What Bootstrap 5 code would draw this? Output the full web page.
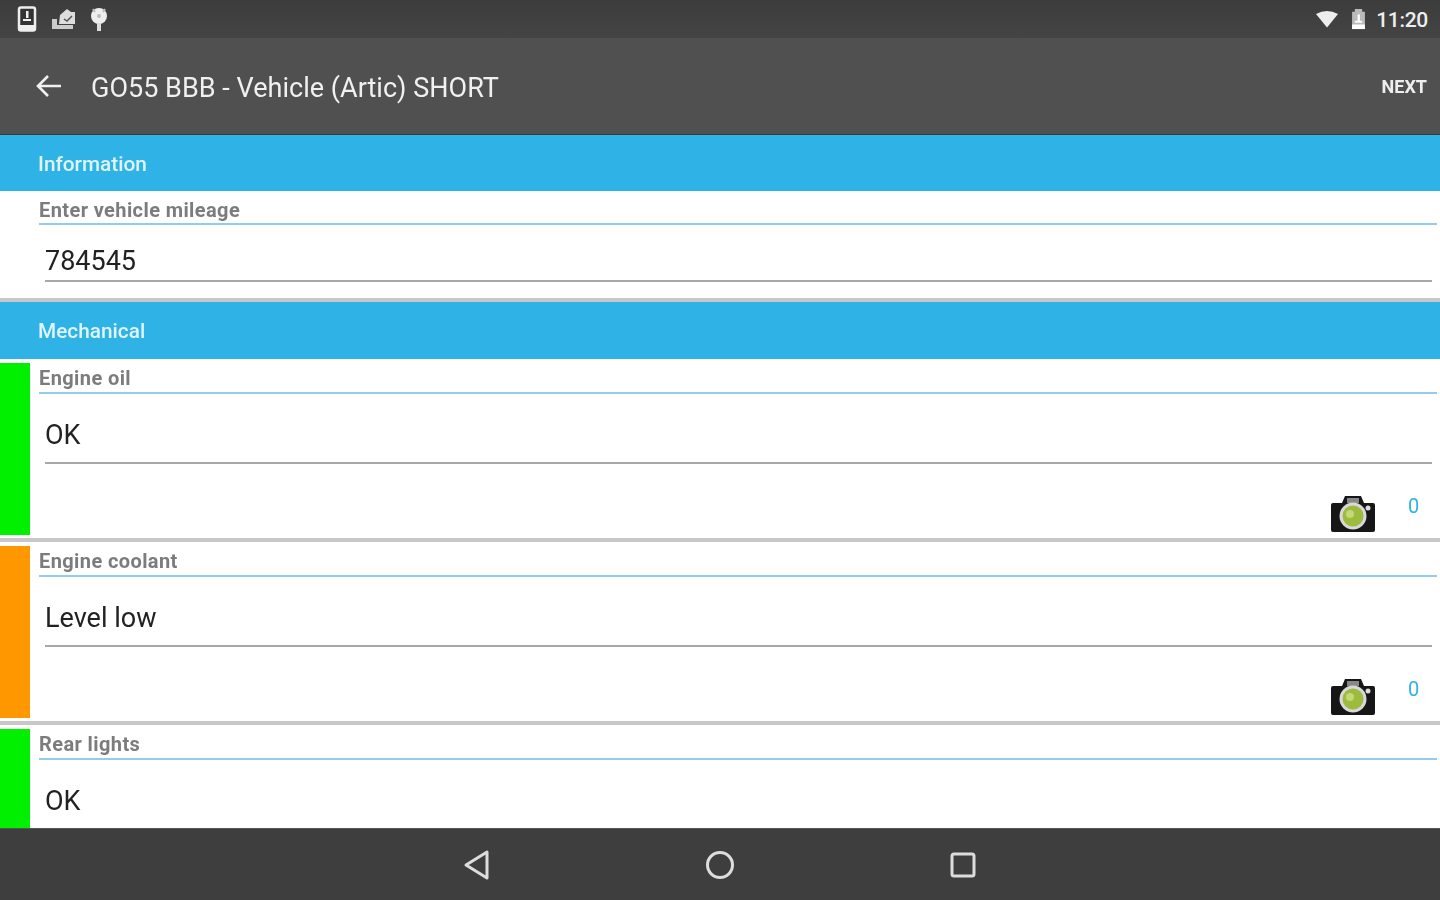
<!doctype html>
<html lang="en"><head><meta charset="utf-8"><title>Vehicle check</title>
<link href="https://cdn.jsdelivr.net/npm/bootstrap@5.3.0/dist/css/bootstrap.min.css" rel="stylesheet">
<style>
html,body{height:100%;margin:0;overflow:hidden}
body{font-family:Roboto,"Liberation Sans",sans-serif;background:#fff}
.app-shell{height:900px;filter:blur(.6px)}
.status-strip{height:38px;background:linear-gradient(#3c3c3c,#444);color:#eee;padding:0 12px 0 17px}
.status-time{font-size:21px;font-weight:500;letter-spacing:-.3px;margin-top:3px;margin-left:10px}
.app-toolbar{height:97px;background:#505050;color:#f0f0f0;border-bottom:1px solid #3a3a3a;padding:0 13px 0 35px}
.toolbar-title{font-size:27px;margin-left:29px;margin-top:5px;letter-spacing:.02px;line-height:1}
.toolbar-next{font-size:18px;font-weight:700;color:#eee}
.content-clip{min-height:0;overflow:hidden}
.section-head{background:#2fb2e6;color:#dff4fd;font-size:20.800px;font-weight:500;padding-left:38px}
.head-info{height:56px;padding-top:4px}
.head-mech{height:57px;padding-top:3px}
.info-body{height:107px;padding-left:39px}
.thick-rule{height:4px;background:#c8c8c8}
.check-row{height:179px;padding-top:4px}
.check-row.row-end{height:auto}
.status-bar{width:30px;flex:0 0 30px;height:172px}
.bar-ok{background:#00f000}
.bar-warn{background:#ff9800}
.row-main{min-width:0;padding-left:9px}
.field-label{font-size:20px;font-weight:700;letter-spacing:.4px;color:#7c7c7c;line-height:24px;height:31px;border-bottom:2px solid #94cdec;margin-right:3px;padding-top:3px}
.field-value{font-size:27px;color:#222;margin:0 8px 0 6px;line-height:1;border-bottom:2px solid #a8a8a8}
.info-body .field-label{height:34px;padding-top:7px}
.info-body .field-value{padding:23px 0 5px}
.check-row .field-value{padding:28px 0 0;height:70px}
.attach-line{height:70px;padding-right:21px;padding-top:30px}
.attach-count{font-size:20px;color:#2fb2e6;margin-left:32px;line-height:1;margin-top:2px;width:11px}
.row-sep{height:4px;background:#c8c8c8}
.nav-strip{height:72px;background:#3e3e3e;border-top:1px solid #555;flex:0 0 72px;padding-top:1px}
.nav-slot{width:243px}
.wifi-gap{margin-left:13px}
.tray-icon{margin-left:6px}
</style></head><body>
<div class="app-shell d-flex flex-column">
<div class="status-strip d-flex align-items-center flex-shrink-0">
<div class="d-flex align-items-center gap-2">
<svg width="20" height="26" viewBox="0 0 20 26"><rect x="2" y="1.500" width="16" height="23" rx="2" fill="#333" stroke="#eee" stroke-width="2.500"/><rect x="2" y="19" width="16" height="5" fill="#eee"/><rect x="9" y="5" width="2.500" height="7" fill="#eee"/><rect x="6" y="13" width="8" height="2" fill="#eee"/></svg>
<svg width="26" height="24" viewBox="0 0 26 24" class="tray-icon"><path d="M9 8 L16 2 L20 5 L24 5 V17 H8Z" fill="#ddd"/><path d="M1 12 H6 V18 H22 V22 H1Z" fill="#ccc"/><path d="M13 12 L16 14 L21 9" fill="none" stroke="#555" stroke-width="1.500"/></svg>
<svg width="20" height="26" viewBox="0 0 20 26" class="ms-1"><circle cx="10" cy="10" r="8" fill="#eee"/><rect x="8" y="17" width="4" height="8" fill="#ddd"/><path d="M4 3 L6 6 M16 3 L14 6" stroke="#bbb" stroke-width="2"/><circle cx="10" cy="10" r="2" fill="#bbb"/></svg>
</div>
<div class="ms-auto d-flex align-items-center">
<svg width="22" height="18" viewBox="0 0 26 20"><path d="M0 4 Q13 -3 26 4 L13 20Z" fill="#eee"/></svg>
<svg width="15" height="22" viewBox="0 0 16 24" class="wifi-gap"><path d="M4 4 V1 H12 V4 H15 V23 H1 V4Z" fill="#bbb"/><rect x="1" y="18" width="14" height="5" fill="#fff"/><rect x="7" y="7" width="2.500" height="8" fill="#fff"/><rect x="4" y="14" width="8" height="2" fill="#fff"/></svg>
<span class="status-time">11:20</span>
</div>
</div>
<div class="app-toolbar d-flex align-items-center flex-shrink-0">
<svg width="27" height="26" viewBox="0 0 27 26"><path d="M26 13 H3 M13 3 L3 13 L13 23" fill="none" stroke="#f0f0f0" stroke-width="2.600"/></svg>
<span class="toolbar-title">GO55 BBB - Vehicle (Artic) SHORT</span>
<span class="toolbar-next ms-auto">NEXT</span>
</div>
<div class="content-clip flex-grow-1">
<div class="section-head head-info d-flex align-items-center">Information</div>
<div class="info-body">
<div class="field-label">Enter vehicle mileage</div>
<div class="field-value">784545</div>
</div>
<div class="thick-rule"></div>
<div class="section-head head-mech d-flex align-items-center">Mechanical</div>
<div class="check-row d-flex">
<div class="status-bar bar-ok"></div>
<div class="row-main flex-grow-1">
<div class="field-label">Engine oil</div>
<div class="field-value">OK</div>
<div class="attach-line d-flex justify-content-end">
<svg width="46" height="40" viewBox="0 0 46 40"><path d="M3 9 H12 L15 2 H31 L34 9 H43 Q45 9 45 11 V36 Q45 38 43 38 H3 Q1 38 1 36 V11 Q1 9 3 9Z" fill="#161616"/><rect x="17" y="4" width="12" height="5" fill="#888"/><circle cx="23" cy="22" r="13.500" fill="#d8d8d8"/><circle cx="23" cy="22" r="10.500" fill="#9dbb3c"/><circle cx="20" cy="20" r="4" fill="#c4d878"/><circle cx="38" cy="14" r="2.500" fill="#ddd"/></svg>
<span class="attach-count">0</span>
</div>
</div>
</div>
<div class="row-sep"></div>
<div class="check-row d-flex">
<div class="status-bar bar-warn"></div>
<div class="row-main flex-grow-1">
<div class="field-label">Engine coolant</div>
<div class="field-value">Level low</div>
<div class="attach-line d-flex justify-content-end">
<svg width="46" height="40" viewBox="0 0 46 40"><path d="M3 9 H12 L15 2 H31 L34 9 H43 Q45 9 45 11 V36 Q45 38 43 38 H3 Q1 38 1 36 V11 Q1 9 3 9Z" fill="#161616"/><rect x="17" y="4" width="12" height="5" fill="#888"/><circle cx="23" cy="22" r="13.500" fill="#d8d8d8"/><circle cx="23" cy="22" r="10.500" fill="#9dbb3c"/><circle cx="20" cy="20" r="4" fill="#c4d878"/><circle cx="38" cy="14" r="2.500" fill="#ddd"/></svg>
<span class="attach-count">0</span>
</div>
</div>
</div>
<div class="row-sep"></div>
<div class="check-row row-end d-flex">
<div class="status-bar bar-ok"></div>
<div class="row-main flex-grow-1">
<div class="field-label">Rear lights</div>
<div class="field-value">OK</div>
</div>
</div>
</div>
<div class="nav-strip d-flex justify-content-center align-items-center">
<div class="nav-slot d-flex justify-content-center"><svg width="28" height="32" viewBox="0 0 28 32"><path d="M24 3 V29 L3 16Z" fill="none" stroke="#ddd" stroke-width="3" stroke-linejoin="round"/></svg></div>
<div class="nav-slot d-flex justify-content-center"><svg width="30" height="30" viewBox="0 0 30 30"><circle cx="15" cy="15" r="12.500" fill="none" stroke="#ddd" stroke-width="3"/></svg></div>
<div class="nav-slot d-flex justify-content-center"><svg width="28" height="28" viewBox="0 0 28 28"><rect x="3" y="3" width="22" height="22" rx="2" fill="none" stroke="#ddd" stroke-width="3"/></svg></div>
</div>
</div>
<script src="https://cdn.jsdelivr.net/npm/bootstrap@5.3.0/dist/js/bootstrap.bundle.min.js"></script>
</body></html>
